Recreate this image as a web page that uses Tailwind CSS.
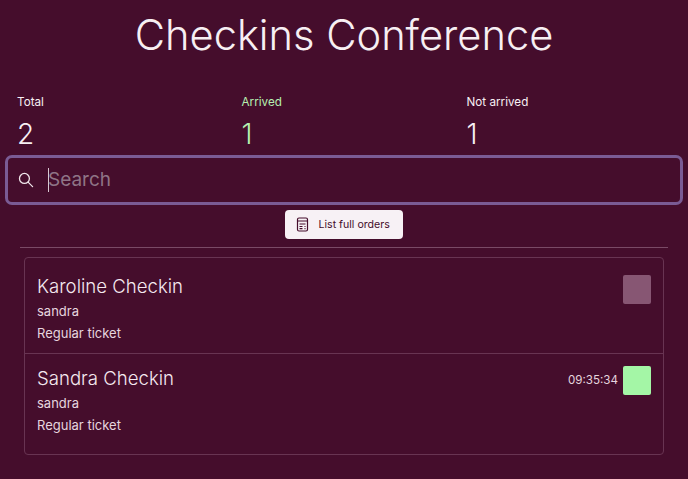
<!DOCTYPE html>
<html lang="en">
<head>
  <meta charset="UTF-8" />
  <title>Checkins Conference</title>
  <script src="https://cdn.jsdelivr.net/npm/@tailwindcss/browser@4"></script>
</head>
<body class="bg-[#450d2c] font-['Inter',sans-serif] text-[#f7eff3] w-[688px] h-[479px] overflow-hidden">

  <!-- Title -->
  <h1 class="pt-[9px] h-[94px] text-center text-[41.6px] leading-[52px] font-[350]">Checkins Conference</h1>

  <!-- Stats -->
  <div class="grid grid-cols-[224.5px_225px_1fr] pl-[17px] h-[53px]">
    <div>
      <div class="text-[11.7px] leading-[14px] mt-[1px]">Total</div>
      <div class="text-[28px] leading-[24px] mt-[13px] font-light">2</div>
    </div>
    <div class="text-[#b5f0b0]">
      <div class="text-[11.7px] leading-[14px] mt-[1px]">Arrived</div>
      <div class="text-[28px] leading-[24px] mt-[13px] font-light">1</div>
    </div>
    <div>
      <div class="text-[11.7px] leading-[14px] mt-[1px]">Not arrived</div>
      <div class="text-[28px] leading-[24px] mt-[13px] font-light">1</div>
    </div>
  </div>

  <!-- Search -->
  <div class="mt-[8px] mx-[5px] h-[50px] border-[3px] border-[#7a5b94] rounded-[7px] flex items-center pl-[9px] pb-[1px]">
    <svg class="w-[17px] h-[17px] text-[#f0e6eb]" viewBox="0 0 24 24" fill="none" stroke="currentColor" stroke-width="1.8" stroke-linecap="round">
      <circle cx="10.5" cy="10.5" r="7" />
      <path d="M16 16l6 6" />
    </svg>
    <div class="ml-[14px] w-[1px] h-[24px] bg-[#d8c8d2]"></div>
    <span class="-ml-[1px] text-[19px] leading-[24px] text-[#8f7486]">Search</span>
  </div>

  <!-- Button -->
  <div class="flex justify-center mt-[5px] pr-[1px]">
    <button class="w-[118px] h-[29px] bg-[#f7f1f5] rounded-[4px] flex items-center pl-[11px] text-[#450d2c] text-[10.6px]">
      <svg class="w-[13px] h-[15px]" viewBox="0 0 13 15" fill="none" stroke="currentColor" stroke-width="1.2">
        <rect x="1.5" y="1" width="10" height="13" rx="1.5" />
        <path d="M1.5 4h10M3.5 7h6M3.5 9.5h3M3.5 11.7h3M8.5 9.5h1M8.5 11.7h1" />
      </svg>
      <span class="ml-[10px]">List full orders</span>
    </button>
  </div>

  <div class="mt-[8px] mx-[20px] border-t border-[#7a4a66]"></div>

  <!-- Attendee list -->
  <div class="mt-[9px] ml-[24px] w-[640px] h-[198px] border border-[#683452] rounded-[4px]">
    <div class="h-[96px] border-b border-[#683452] flex justify-between pl-[12px] pr-[12px]">
      <div>
        <div class="mt-[15px] text-[18.6px] leading-[26px] font-[350] text-[#f5e9f0]">Karoline Checkin</div>
        <div class="mt-[2px] text-[13px] leading-[20px] text-[#e6d5df]">sandra</div>
        <div class="mt-[2px] text-[13px] leading-[20px] text-[#e6d5df]">Regular ticket</div>
      </div>
      <div class="mt-[17px] w-[28px] h-[29px] rounded-[2px] bg-[#875673]"></div>
    </div>
    <div class="flex justify-between pl-[12px] pr-[12px]">
      <div>
        <div class="mt-[11px] text-[18.6px] leading-[26px] font-[350] text-[#f5e9f0]">Sandra Checkin</div>
        <div class="mt-[2px] text-[13px] leading-[20px] text-[#e6d5df]">sandra</div>
        <div class="mt-[2px] text-[13px] leading-[20px] text-[#e6d5df]">Regular ticket</div>
      </div>
      <div class="flex items-start gap-[5px] mt-[12px]">
        <span class="mt-[6px] text-[11.6px] leading-[16px] text-[#e6d5df]">09:35:34</span>
        <div class="w-[28px] h-[29px] rounded-[2px] bg-[#a4f6a6]"></div>
      </div>
    </div>
  </div>

</body>
</html>
